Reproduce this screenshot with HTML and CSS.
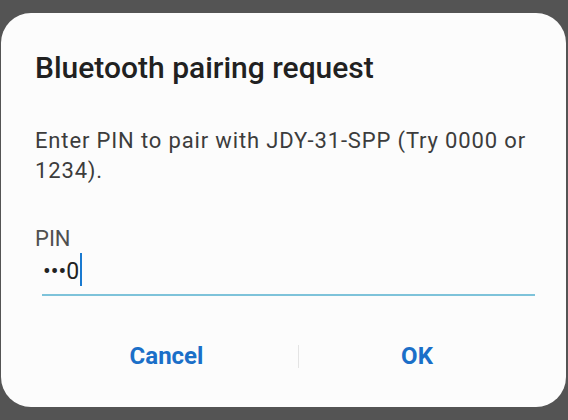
FILE: index.html
```html
<!DOCTYPE html>
<html>
<head>
<meta charset="utf-8">
<link rel="stylesheet" href="styles.css">
</head>
<body>
<div class="dialog">
  <h1 class="title">Bluetooth pairing request</h1>
  <p class="message">Enter PIN to pair with JDY-31-SPP (Try 0000 or 1234).</p>
  <div class="field">
    <div class="label">PIN</div>
    <div class="input"><span class="value">•••0</span><span class="caret"></span></div>
  </div>
  <div class="actions">
    <div class="btn">Cancel</div>
    <div class="sep"></div>
    <div class="btn">OK</div>
  </div>
</div>
</body>
</html>
```
FILE: styles.css
```css
html, body {
  margin: 0;
  padding: 0;
  background: #545454;
  width: 568px;
  height: 420px;
  overflow: hidden;
}
.dialog {
  margin: 13px 2px 0 1px;
  height: 394px;
  box-sizing: border-box;
  background: #fcfcfc;
  border-radius: 30px;
  padding: 37px 31px 0 34px;
  display: flex;
  flex-direction: column;
  font-family: Roboto, "Noto Sans", sans-serif;
}
.title {
  margin: 0;
  font-size: 30px;
  font-weight: 500;
  line-height: 36px;
  color: #212121;
}
.message {
  margin: 40px 0 0;
  font-size: 22px;
  letter-spacing: 0.85px;
  line-height: 30px;
  color: #3c3c3c;
}
.field {
  margin-top: 39px;
}
.label {
  font-size: 22px;
  line-height: 28px;
  color: #505050;
}
.input {
  margin-left: 7px;
  height: 37px;
  padding-top: 4px;
  border-bottom: 2px solid #7ec3da;
  display: flex;
  align-items: flex-start;
  font-size: 23px;
  line-height: 30px;
  color: #222;
}
.value {
  margin-left: 1px;
}
.caret {
  width: 2px;
  height: 33px;
  margin-top: -4px;
  margin-left: 1px;
  background: #1a7ad0;
}
.actions {
  margin-top: 45px;
  display: grid;
  grid-template-columns: 263px 1px 1fr;
  align-items: center;
}
.btn {
  text-align: center;
  font-size: 24px;
  font-weight: 700;
  color: #1b6fc8;
  line-height: 30px;
}
.sep {
  height: 23px;
  background: #e4e4e4;
}
```
